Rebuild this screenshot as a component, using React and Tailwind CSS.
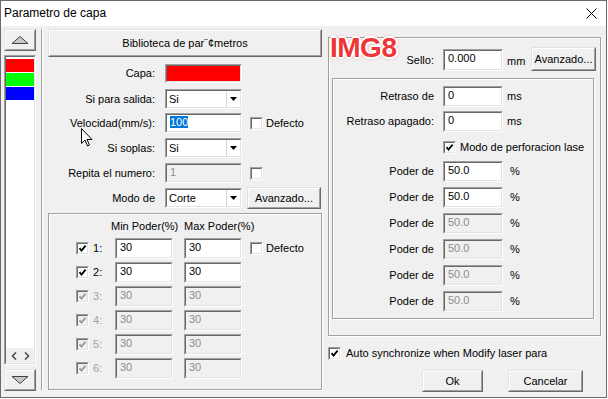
import React from "react";

// ─── Win32 style primitives ──────────────────────────────────────────────────
function Sunken({ className = "", inner = "bg-white", children }) {
  return (
    <div
      className={`border border-t-[#a0a0a0] border-l-[#a0a0a0] border-r-white border-b-white ${className}`}
    >
      <div
        className={`h-full w-full border border-t-[#696969] border-l-[#696969] border-r-[#e3e3e3] border-b-[#e3e3e3] ${inner}`}
      >
        {children}
      </div>
    </div>
  );
}

function Raised({ className = "", children }) {
  return (
    <div
      className={`border border-t-[#e3e3e3] border-l-[#e3e3e3] border-r-[#696969] border-b-[#696969] ${className}`}
    >
      <div className="h-full w-full border border-t-white border-l-white border-r-[#a0a0a0] border-b-[#a0a0a0] flex items-center justify-center">
        {children}
      </div>
    </div>
  );
}

function Field({ className, value, disabled, selected }) {
  return (
    <Sunken className={className} inner={disabled ? "bg-[#f0f0f0]" : "bg-white"}>
      <div
        className={`pl-[3px] pt-[1px] leading-[13px] whitespace-nowrap ${
          disabled ? "text-[#8d8d8d]" : "text-black"
        }`}
      >
        {selected ? <span className="bg-[#0078d7] text-white">{value}</span> : value}
      </div>
    </Sunken>
  );
}

function Select({ value }) {
  return (
    <Sunken className="w-[77px] h-[20px]">
      <div className="flex h-full">
        <div className="flex-1 flex items-center pl-[2px]">{value}</div>
        <div className="w-[14px] border-l border-[#d6d6d6] flex items-center justify-center">
          <svg width="7" height="4" viewBox="0 0 7 4">
            <path d="M0 0h7L3.5 4z" fill="#000" />
          </svg>
        </div>
      </div>
    </Sunken>
  );
}

function Check({ checked, disabled }) {
  return (
    <Sunken className="w-[13px] h-[13px]" inner={disabled ? "bg-[#f0f0f0]" : "bg-white"}>
      {checked && (
        <svg width="9" height="9" viewBox="0 0 9 9" className="block">
          <path
            d="M1.5 4.2l2 2.3L7.6 1.6"
            stroke={disabled ? "#9a9a9a" : "#000"}
            strokeWidth="1.8"
            fill="none"
          />
        </svg>
      )}
    </Sunken>
  );
}

const groupBox =
  "border border-[#a0a0a0] shadow-[inset_1px_1px_0_#fff,1px_1px_0_#fff]";

// ─── Left layer list ─────────────────────────────────────────────────────────
function LayerStrip() {
  return (
    <div className="ml-[3px] w-[32px] flex flex-col">
      <Raised className="mt-[3px] h-[22px]">
        <svg width="18" height="8" viewBox="0 0 18 8">
          <path d="M1 7.5L9 0.5l8 7z" fill="#c8c8c8" stroke="#404040" />
        </svg>
      </Raised>
      <Sunken className="mt-[4px] h-[310px]">
        <div className="flex flex-col h-full">
          <div className="flex-1 bg-white pt-[2px]">
            <div className="h-[13px] bg-[#ff0000]" />
            <div className="h-[13px] mt-[1px] bg-[#00ff00]" />
            <div className="h-[13px] mt-[1px] bg-[#0000ff]" />
          </div>
          <div className="h-[15px] bg-[#f0f0f0] flex items-center justify-around px-[1px]">
            <svg width="6" height="8" viewBox="0 0 6 8">
              <path d="M5 0.5L1.5 4 5 7.5" stroke="#505050" strokeWidth="1.6" fill="none" />
            </svg>
            <svg width="6" height="8" viewBox="0 0 6 8">
              <path d="M1 0.5L4.5 4 1 7.5" stroke="#505050" strokeWidth="1.6" fill="none" />
            </svg>
          </div>
        </div>
      </Sunken>
      <Raised className="mt-[4px] h-[22px]">
        <svg width="18" height="8" viewBox="0 0 18 8">
          <path d="M1 0.5L9 7.5l8-7z" fill="#c8c8c8" stroke="#404040" />
        </svg>
      </Raised>
    </div>
  );
}

// ─── Left parameter panel ────────────────────────────────────────────────────
function Row({ label, className = "", children }) {
  return (
    <div className={`flex items-center h-[20px] ${className}`}>
      <div className="w-[107px] text-right whitespace-nowrap">{label}</div>
      <div className="ml-[10px] flex items-center">{children}</div>
    </div>
  );
}

function PowerRow({ n, enabled, checked, defecto, className = "" }) {
  const dis = !enabled;
  return (
    <div className={`flex items-center h-[21px] ${className}`}>
      <Check checked={checked} disabled={dis} />
      <span className={`ml-[4px] w-[22px] ${dis ? "text-[#a0a0a0]" : "text-black"}`}>{n}:</span>
      <Field className="w-[58px] h-[21px]" value="30" disabled={dis} />
      <Field className="ml-[11px] w-[58px] h-[21px]" value="30" disabled={dis} />
      {defecto && (
        <div className="ml-[8px] flex items-center">
          <Check />
          <span className="ml-[3px]">Defecto</span>
        </div>
      )}
    </div>
  );
}

function LeftPanel() {
  return (
    <div className="ml-[5px] w-[274px] flex flex-col">
      <Raised className="mt-[3px] h-[28px]">Biblioteca de par¨¢metros</Raised>

      <Row label="Capa:" className="mt-[6px] h-[19px]">
        <Sunken className="w-[77px] h-[19px]" inner="bg-[#ff0000]" />
      </Row>
      <Row label="Si para salida:" className="mt-[6px]">
        <Select value="Si" />
      </Row>
      <Row label="Velocidad(mm/s):" className="mt-[4px]">
        <Field className="w-[77px] h-[20px]" value="100" selected />
        <div className="ml-[8px] flex items-center">
          <Check />
          <span className="ml-[3px]">Defecto</span>
        </div>
      </Row>
      <Row label="Si soplas:" className="mt-[5px]">
        <Select value="Si" />
      </Row>
      <Row label="Repita el numero:" className="mt-[5px]">
        <Field className="w-[77px] h-[20px]" value="1" disabled />
        <div className="ml-[8px]">
          <Check />
        </div>
      </Row>
      <Row label="Modo de" className="mt-[5px]">
        <Select value="Corte" />
        <Raised className="ml-[5px] w-[74px] h-[22px]">Avanzado...</Raised>
      </Row>

      <div className={`mt-[5px] h-[177px] ${groupBox} pl-[27px]`}>
        <div className="mt-[6px] flex leading-[13px]">
          <span className="ml-[35px] w-[73px]">Min Poder(%)</span>
          <span>Max Poder(%)</span>
        </div>
        <PowerRow n={1} enabled checked defecto className="mt-[5px]" />
        <PowerRow n={2} enabled checked className="mt-[3px]" />
        <PowerRow n={3} checked className="mt-[3px]" />
        <PowerRow n={4} checked className="mt-[3px]" />
        <PowerRow n={5} checked className="mt-[3px]" />
        <PowerRow n={6} checked className="mt-[3px]" />
      </div>
    </div>
  );
}

// ─── Right laser panel ───────────────────────────────────────────────────────
function RightRow({ label, unit, value, disabled, className = "" }) {
  return (
    <div className={`flex items-center h-[21px] ${className}`}>
      <div className="w-[101px] text-right whitespace-nowrap">{label}</div>
      <Field className="ml-[9px] w-[60px] h-[21px]" value={value} disabled={disabled} />
      <span className={unit === "%" ? "ml-[7px]" : "ml-[4px]"}>{unit}</span>
    </div>
  );
}

function RightPanel() {
  return (
    <div className="ml-[6px] w-[273px] flex flex-col">
      <div className={`mt-[11px] h-[299px] ${groupBox}`}>
        <div className="mt-[9px] flex items-end h-[24px]">
          <div className="h-[22px] w-[105px] flex items-center justify-end">Sello:</div>
          <Field className="ml-[9px] w-[60px] h-[22px]" value="0.000" />
          <div className="h-[22px] w-[28px] pl-[4px] flex items-center pt-[2px]">mm</div>
          <Raised className="w-[65px] h-[24px]">Avanzado...</Raised>
        </div>

        <div className={`ml-[3px] mt-[7px] w-[262px] h-[241px] ${groupBox}`}>
          <RightRow label="Retraso de" unit="ms" value="0" className="mt-[7px]" />
          <RightRow label="Retraso apagado:" unit="ms" value="0" className="mt-[4px] h-[20px]" />
          <div className="mt-[9px] ml-[110px] flex items-center h-[13px]">
            <Check checked />
            <span className="ml-[4px] whitespace-nowrap">Modo de perforacion lase</span>
          </div>
          <RightRow label="Poder de" unit="%" value="50.0" className="mt-[7px]" />
          <RightRow label="Poder de" unit="%" value="50.0" className="mt-[5px]" />
          <RightRow label="Poder de" unit="%" value="50.0" disabled className="mt-[5px]" />
          <RightRow label="Poder de" unit="%" value="50.0" disabled className="mt-[5px]" />
          <RightRow label="Poder de" unit="%" value="50.0" disabled className="mt-[5px]" />
          <RightRow label="Poder de" unit="%" value="50.0" disabled className="mt-[5px]" />
        </div>
      </div>

      <div className="mt-[11px] flex items-center h-[13px]">
        <Check checked />
        <span className="ml-[5px] whitespace-nowrap">Auto synchronize when Modify laser para</span>
      </div>

      <div className="mt-[10px] flex">
        <Raised className="ml-[94px] w-[61px] h-[22px]">Ok</Raised>
        <Raised className="ml-[25px] w-[75px] h-[22px]">Cancelar</Raised>
      </div>
    </div>
  );
}

// ─── Dialog ──────────────────────────────────────────────────────────────────
export default function App() {
  return (
    <div className="relative w-[607px] h-[398px] border border-[#6b6b6b] bg-[#f0f0f0] text-[11px] leading-[13px] text-black font-['Liberation_Sans',Arial,sans-serif] flex flex-col overflow-hidden">
      <div className="h-[25px] bg-white flex items-center justify-between pl-[3px] pr-[9px] shrink-0">
        <span className="text-[12px]">Parametro de capa</span>
        <svg width="11" height="11" viewBox="0 0 11 11">
          <path d="M0.5 0.5l10 10M10.5 0.5l-10 10" stroke="#000" strokeWidth="1" />
        </svg>
      </div>

      <div className="flex flex-1">
        <LayerStrip />
        <div className="ml-[5px] mt-[3px] w-[2px] h-[361px] border-l border-l-[#a0a0a0] border-r border-r-white" />
        <LeftPanel />
        <RightPanel />
      </div>

      <div className="absolute left-[329px] top-[33px] text-[28px] leading-[28px] font-bold text-[#ee3636] tracking-[-0.5px] [text-shadow:1px_0_0_#fff,-1px_0_0_#fff,0_1px_0_#fff,0_-1px_0_#fff,1px_1px_0_#fff,-1px_-1px_0_#fff,1px_-1px_0_#fff,-1px_1px_0_#fff,2px_0_0_#fff,-2px_0_0_#fff,0_2px_0_#fff,0_-2px_0_#fff,0_0_4px_#e86a6a]">
        IMG8
      </div>

      {/* mouse cursor */}
      <svg
        className="absolute left-[80px] top-[127px]"
        width="12"
        height="19"
        viewBox="0 0 12 19"
      >
        <path d="M0.5 0.5v15l3.5-3.5 2.5 6 2-1-2.5-5.5h5z" fill="#fff" stroke="#000" />
      </svg>
    </div>
  );
}
